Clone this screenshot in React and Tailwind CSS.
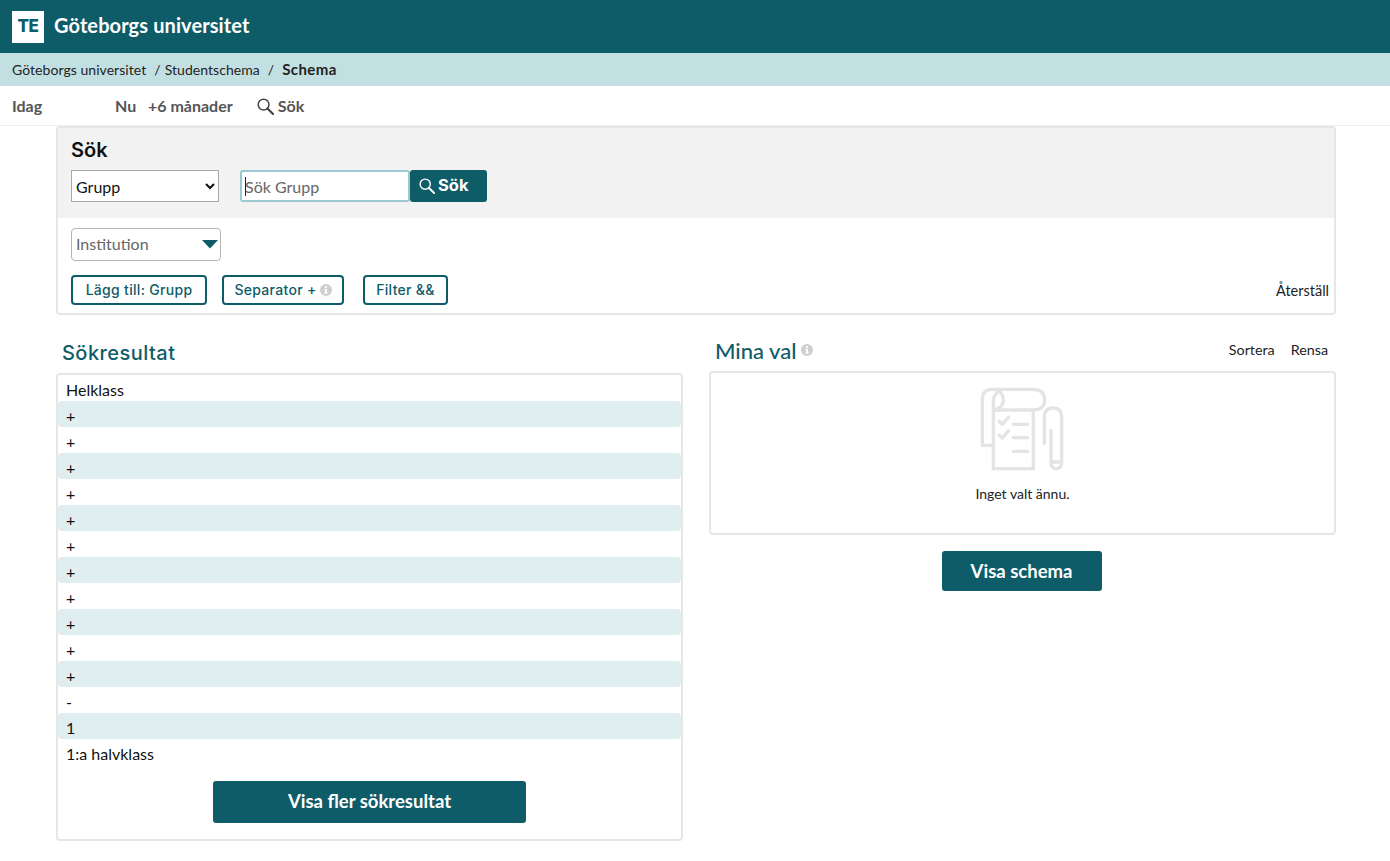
import React from "react";

const lato = "font-['Lato','Liberation_Sans',sans-serif]";
const head = "font-['Inter','Liberation_Sans',sans-serif]";

function Info({ className }) {
  return (
    <svg viewBox="0 0 12 12" className={className} aria-hidden="true">
      <circle cx="6" cy="6" r="6" fill="#cfcfcf" />
      <rect x="5" y="5" width="2" height="4.4" fill="#fff" />
      <rect x="4.2" y="8.4" width="3.6" height="1.1" fill="#fff" />
      <rect x="4.3" y="5" width="2.2" height="1" fill="#fff" />
      <circle cx="6" cy="3.2" r="1.1" fill="#fff" />
    </svg>
  );
}

function Magnifier({ className }) {
  return (
    <svg viewBox="0 0 17 17" className={className} fill="none" stroke="currentColor" aria-hidden="true">
      <circle cx="6.6" cy="6.6" r="5.4" strokeWidth="1.5" />
      <path d="M10.5 10.5L16 16" strokeWidth="2.1" strokeLinecap="round" />
    </svg>
  );
}

function NotesIcon() {
  return (
    <svg viewBox="90 35 255 255" className="w-[85px] h-[85px] block" fill="none" stroke="#e4e4e4" strokeWidth="10" strokeLinecap="round" strokeLinejoin="round" aria-hidden="true">
      <path d="M130 210H97V72Q97 42 127 42H248Q284 42 284 73Q284 104 248 104H135" />
      <path d="M130 280V78Q130 60 146 48Q160 56 160 74Q160 92 143 100Q130 100 130 112" />
      <path d="M130 280H250V104" />
      <path d="M147 138L157 147L176 125M147 179L157 188L176 166" />
      <path d="M190 147H233M190 187H233M190 228H233" />
      <path d="M283 204V125Q283 98 310 98Q335 98 335 125V260Q335 280 319 280Q303 280 303 260V165" />
      <path d="M303 260H335" />
    </svg>
  );
}

function OutlineBtn({ children, className = "" }) {
  return (
    <button className={`h-[30px] pb-[1px] border-2 border-[#0f5c69] rounded-[4px] bg-white text-[#0f5c69] text-[14px] tracking-[0.3px] font-medium flex items-center justify-center ${head} ${className}`}>
      {children}
    </button>
  );
}

const rows = ["Helklass", "+", "+", "+", "+", "+", "+", "+", "+", "+", "+", "+", "-", "1", "1:a halvklass"];

export default function App() {
  return (
    <div className={`${lato} w-[1390px] min-h-[861px] bg-white text-[#111]`}>
      <header className="h-[53px] bg-[#0f5c69] flex items-center pl-3">
        <div className="w-8 h-8 bg-white flex items-center justify-center">
          <span className={`text-[#0f5c69] text-[17px] font-extrabold tracking-[-0.5px] ${head}`}>TE</span>
        </div>
        <span className="ml-2.5 pb-1 text-white text-[20px] tracking-[0.1px] font-bold">Göteborgs universitet</span>
      </header>

      <nav className="h-[33px] bg-[#c2e0e2] flex items-center pl-3 text-[14px] tracking-[0.05px] text-[#222]">
        <span>Göteborgs universitet</span>
        <span className="ml-2">/</span>
        <span className="ml-1">Studentschema</span>
        <span className="ml-2">/</span>
        <span className="ml-2 font-bold text-[15px] tracking-[0.4px]">Schema</span>
      </nav>

      <div className="h-10 border-b border-[#eeeeee] flex items-center pl-3 pt-[1px] text-[16px] font-bold text-[#555]">
        <span className="w-[103px]">Idag</span>
        <span className="w-[33px]">Nu</span>
        <span>+6 månader</span>
        <Magnifier className="ml-6 w-[17px] h-[17px] text-[#444]" />
        <span className="ml-[4px]">Sök</span>
      </div>

      <main className="mx-14 w-[1280px]">
        <section className="h-[189px] border-2 border-[#e6e6e6] rounded-[4px] flex flex-col">
          <div className="h-[90px] bg-[#f2f2f2] pl-[13px]">
            <h2 className={`pt-[10px] text-[20px] leading-6 font-semibold text-[#111] ${head}`}>Sök</h2>
            <div className="mt-2 flex">
              <select defaultValue="Grupp" className="w-[148px] h-8 bg-white border border-[#aaaaaa] text-[16px] text-[#111]">
                <option>Grupp</option>
              </select>
              <div className="relative ml-[21px]">
                <input placeholder="Sök Grupp" className="w-[170px] h-8 pl-[3px] bg-white border-2 border-[#9cc9cf] rounded-[3px] text-[16px] outline-none placeholder:text-[#666666]" />
                <span className="absolute left-[5px] top-[7px] w-px h-[19px] bg-[#222]" />
              </div>
              <button className={`w-[77px] h-8 pl-[9px] pb-[1px] bg-[#0f5c69] rounded-[3px] text-white text-[16.5px] font-bold flex items-center gap-[3px] ${head}`}>
                <Magnifier className="w-4 h-4" />
                Sök
              </button>
            </div>
          </div>
          <div className="flex-1 pl-[13px] pr-[5px] flex flex-col">
            <div className="mt-[10px] w-[150px] h-[33px] pb-[2px] border border-[#b5b5b5] rounded-[4px] flex items-center justify-between pl-1 pr-[2px] text-[16px] text-[#666]">
              <span>Institution</span>
              <svg viewBox="0 0 16 9" className="w-4 h-[9px] mt-[2px]" aria-hidden="true">
                <path d="M0 0H16L8 8.5Z" fill="#0f5c69" />
              </svg>
            </div>
            <div className="mt-[14px] flex items-center">
              <OutlineBtn className="w-[136px]">Lägg till: Grupp</OutlineBtn>
              <OutlineBtn className="ml-[15px] w-[122px] gap-[3px]">
                Separator +
                <Info className="w-3 h-3" />
              </OutlineBtn>
              <OutlineBtn className="ml-[19px] w-[85px]">Filter &amp;&amp;</OutlineBtn>
              <span className="ml-auto pt-[2px] text-[14.5px] text-[#222]">Återställ</span>
            </div>
          </div>
        </section>

        <div className="flex justify-between pb-5">
          <section className="w-[627px]">
            <h2 className={`h-[58px] pl-[6px] pt-[26px] text-[20px] leading-6 tracking-[0.45px] font-medium text-[#0f5c69] ${head}`}>Sökresultat</h2>
            <div className="h-[468px] border-2 border-[#e6e6e6] rounded-[4px] flex flex-col">
              <ul>
                {rows.map((r, i) => (
                  <li key={i} className={`h-[26px] leading-[30px] pl-2 text-[16px] rounded-[4px] ${i % 2 === 1 ? "bg-[#e1eeef]" : ""}`}>
                    {r}
                  </li>
                ))}
              </ul>
              <button className="self-center mt-4 w-[313px] h-[42px] bg-[#0f5c69] rounded-[3px] text-white text-[18.5px] font-bold">
                Visa fler sökresultat
              </button>
            </div>
          </section>

          <section className="w-[627px]">
            <div className="h-[56px] pt-[14px] pl-[6px] pr-2 flex items-center">
              <h2 className="text-[22px] font-medium text-[#0f5c69]">Mina val</h2>
              <Info className="ml-[5px] w-3 h-3" />
              <span className="ml-auto text-[14.3px] text-[#222]">Sortera</span>
              <span className="ml-4 text-[14.3px] text-[#222]">Rensa</span>
            </div>
            <div className="h-[164px] border-2 border-[#e6e6e6] rounded-[4px] flex flex-col items-center pt-[14px]">
              <NotesIcon />
              <p className="mt-[11px] text-[14px] text-[#222]">Inget valt ännu.</p>
            </div>
            <div className="mt-4 flex justify-center pr-[2px]">
              <button className="w-[160px] h-10 pt-[1px] bg-[#0f5c69] rounded-[3px] text-white text-[18.5px] font-bold">Visa schema</button>
            </div>
          </section>
        </div>
      </main>
    </div>
  );
}
